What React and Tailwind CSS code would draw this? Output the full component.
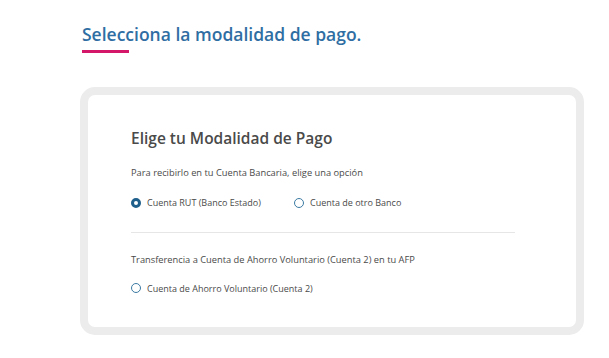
import React from "react";

function Radio({ checked, label }) {
  return (
    <label className="flex items-center gap-[6px] text-[9px] text-[#4a4a4a]">
      <span
        className={
          "w-[10px] h-[10px] rounded-full bg-white " +
          (checked ? "border-[3px] border-[#1f5f8b]" : "border-[1.5px] border-[#3b7aa3]")
        }
      />
      <span>{label}</span>
    </label>
  );
}

export default function App() {
  return (
    <div
      className="w-[609px] h-[358px] bg-white overflow-hidden"
      style={{ fontFamily: "'Open Sans', Lato, sans-serif" }}
    >
      <div className="pl-[82px] pt-[23px]">
        <h1 className="text-[17.5px] font-semibold text-[#2f6ea3] leading-[22px]">
          Selecciona la modalidad de pago.
        </h1>
        <div className="mt-[5px] w-[47px] h-[3px] bg-[#d5176a]" />
      </div>

      <div className="ml-[80px] mt-[34px] w-[504px] h-[248px] border-[8px] border-[#ececec] rounded-[15px] bg-white pl-[43px] pr-[61px] pt-[33px]">
        <h2 className="text-[15.5px] font-semibold text-[#4a4a4a] leading-[20px]">
          Elige tu Modalidad de Pago
        </h2>
        <p className="mt-[19px] text-[9.3px] text-[#4a4a4a] leading-[12px]">
          Para recibirlo en tu Cuenta Bancaria, elige una opción
        </p>
        <div className="mt-[17px] flex items-center">
          <div className="w-[163px]">
            <Radio checked label="Cuenta RUT (Banco Estado)" />
          </div>
          <Radio label="Cuenta de otro Banco" />
        </div>
        <div className="mt-[22px] h-px bg-[#e6e6e6]" />
        <p className="mt-[21px] text-[9.3px] text-[#4a4a4a] leading-[12px]">
          Transferencia a Cuenta de Ahorro Voluntario (Cuenta 2) en tu AFP
        </p>
        <div className="mt-[16px]">
          <Radio label="Cuenta de Ahorro Voluntario (Cuenta 2)" />
        </div>
      </div>
    </div>
  );
}
